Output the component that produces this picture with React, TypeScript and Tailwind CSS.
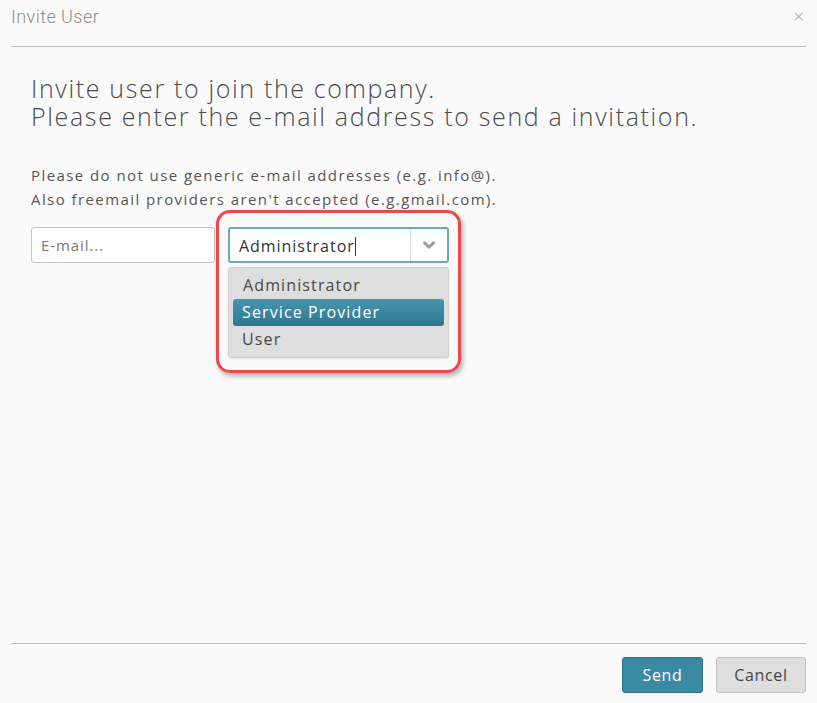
import { ChevronDown } from 'lucide-react';

const font = { fontFamily: '"Open Sans", "Liberation Sans", sans-serif' };

export default function App() {
  return (
    <div
      className="relative h-[703px] w-[817px] bg-[#fafafa] text-[#565656]"
      style={font}
    >
      <div className="mx-[11px] flex h-[47px] items-start justify-between border-b border-[#bdbdbd] pt-[3px]">
        <span
          className="text-[18px] font-light tracking-[0.025em] text-[#8c8c8c]"
          style={{ fontFamily: '"Roboto", "Liberation Sans", sans-serif' }}
        >
          Invite User
        </span>
        <span className="mr-[2px] text-[19px] font-light leading-[26px] text-[#7fa7c4]">×</span>
      </div>

      <div className="px-[31px] pt-[27px]">
        <h1 className="text-[25px] leading-[28px] font-light tracking-[0.066em] text-[#4a4a4a]">
          Invite user to join the company.
          <br />
          Please enter the e-mail address to send a invitation.
        </h1>

        <p className="mt-[33px] text-[15px] leading-[24px] tracking-[0.095em] text-[#565656]">
          Please do not use generic e-mail addresses (e.g. info@).
          <br />
          Also freemail providers aren't accepted (e.g.gmail.com).
        </p>

        <div className="mt-[16px] flex items-start gap-[13px]">
          <div className="flex h-[36px] w-[184px] items-center rounded-[3px] border border-[#c4c4c4] bg-white px-[9px] text-[15px] tracking-[0.06em] text-[#7a7a7a]">
            E-mail...
          </div>

          <div className="relative">
            <div className="pointer-events-none absolute -left-[12px] -top-[17px] h-[163px] w-[245px] rounded-[14px] border-[3px] border-[#f2454d] shadow-[2px_3px_5px_rgba(0,0,0,0.3)]" />
            <div className="flex h-[36px] w-[221px] items-center rounded-[3px] border-2 border-[#6aa9be] bg-white">
              <span className="flex-1 pl-[9px] text-[16px] tracking-[0.06em] text-[#333]">
                Administrator
                <span className="inline-block h-[19px] w-px translate-y-[4px] bg-[#333]" />
              </span>
              <span className="flex h-full w-[37px] items-center justify-center border-l border-[#d9d9d9]">
                <ChevronDown className="h-[18px] w-[18px] text-[#9a9a9a]" strokeWidth={4} />
              </span>
            </div>
            <ul className="absolute left-0 top-[40px] w-[221px] rounded-[3px] border border-[#cfcfcf] bg-[#dedede] px-[4px] py-[4px] text-[16px] tracking-[0.07em] text-[#484848] shadow-[0_1px_2px_rgba(0,0,0,0.1)]">
              <li className="h-[27px] px-[10px] leading-[27px]">Administrator</li>
              <li className="h-[27px] rounded-[3px] bg-gradient-to-b from-[#4796af] to-[#2e7690] px-[9px] leading-[27px] text-white">
                Service Provider
              </li>
              <li className="h-[27px] px-[9px] leading-[27px]">User</li>
            </ul>
          </div>
        </div>
      </div>

      <div className="absolute bottom-0 left-[11px] right-[11px]">
        <div className="flex h-[60px] items-start justify-end gap-[13px] border-t border-[#bdbdbd] pt-[13px]">
          <button className="h-[36px] w-[81px] rounded-[3px] border border-[#2f7288] bg-[#3a8aa3] text-[16px] tracking-[0.04em] text-white">
            Send
          </button>
          <button className="h-[36px] w-[90px] rounded-[3px] border border-[#c4c4c4] bg-[#dedede] text-[16px] tracking-[0.04em] text-[#444]">
            Cancel
          </button>
        </div>
      </div>
    </div>
  );
}
